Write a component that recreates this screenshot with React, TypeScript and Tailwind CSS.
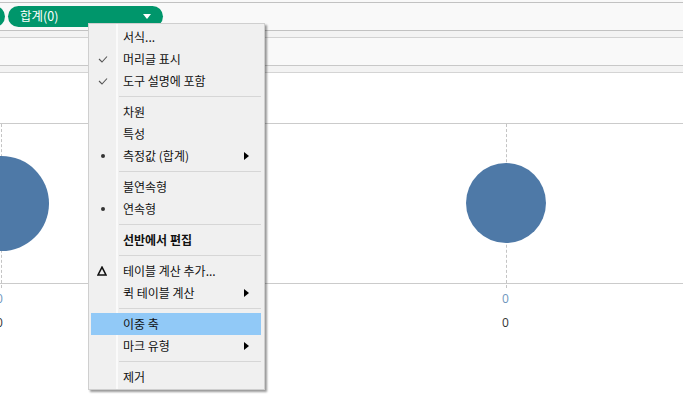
import React from 'react';

type Item =
  | { kind: 'item'; label: string; mark?: 'check' | 'dot' | 'delta'; sub?: boolean; bold?: boolean; active?: boolean }
  | { kind: 'sep' };

const items: Item[] = [
  { kind: 'item', label: '서식...' },
  { kind: 'item', label: '머리글 표시', mark: 'check' },
  { kind: 'item', label: '도구 설명에 포함', mark: 'check' },
  { kind: 'sep' },
  { kind: 'item', label: '차원' },
  { kind: 'item', label: '특성' },
  { kind: 'item', label: '측정값 (합계)', mark: 'dot', sub: true },
  { kind: 'sep' },
  { kind: 'item', label: '불연속형' },
  { kind: 'item', label: '연속형', mark: 'dot' },
  { kind: 'sep' },
  { kind: 'item', label: '선반에서 편집', bold: true },
  { kind: 'sep' },
  { kind: 'item', label: '테이블 계산 추가...', mark: 'delta' },
  { kind: 'item', label: '퀵 테이블 계산', sub: true },
  { kind: 'sep' },
  { kind: 'item', label: '이중 축', active: true },
  { kind: 'item', label: '마크 유형', sub: true },
  { kind: 'sep' },
  { kind: 'item', label: '제거' },
];

const font = { fontFamily: '"Noto Sans CJK KR", "Noto Sans", sans-serif' };

function Mark({ mark }: { mark?: 'check' | 'dot' | 'delta' }) {
  if (mark === 'check')
    return (
      <svg width="10" height="8" viewBox="0 0 10 8">
        <polyline points="1,4 4,7 9,1.5" fill="none" stroke="#555" strokeWidth="1.1" />
      </svg>
    );
  if (mark === 'dot') return <span className="block h-[4px] w-[4px] rounded-full bg-[#333]" />;
  if (mark === 'delta')
    return (
      <svg width="10" height="10" viewBox="0 0 10 10" className="mr-[2px]">
        <polygon points="5,1.2 9,9 1,9" fill="none" stroke="#111" strokeWidth="1.6" />
      </svg>
    );
  return null;
}

function ContextMenu() {
  return (
    <div
      className="absolute left-[88px] top-[23px] w-[177px] border border-[#cfcfcf] bg-[#f0f0f0] pt-[2px] pb-[1px] shadow-[2px_2px_2px_rgba(0,0,0,0.4)]"
      style={font}
    >
      <div className="absolute left-[27px] top-0 bottom-0 w-[2px] bg-[#fafafa]" />
      {items.map((it, i) =>
        it.kind === 'sep' ? (
          <div key={i} className="relative flex h-[9px] items-center pl-[30px] pr-[3px]">
            <div className="h-px w-full bg-[#d6d6d6]" />
          </div>
        ) : (
          <div
            key={i}
            className={`relative mx-[2px] mr-[3px] flex h-[22px] items-center text-[12px] text-[#111] ${
              it.active ? 'bg-[#91c9f7]' : ''
            }`}
          >
            <div className="flex w-[23px] shrink-0 items-center justify-center">
              <Mark mark={it.mark} />
            </div>
            <span className={`ml-[9px] flex-1 ${it.bold ? 'font-bold' : ''}`}>{it.label}</span>
            {it.sub && (
              <svg width="5" height="8" viewBox="0 0 5 8" className="mr-[12px]">
                <polygon points="0,0 5,4 0,8" fill="#000" />
              </svg>
            )}
          </div>
        )
      )}
    </div>
  );
}

export default function App() {
  return (
    <div className="relative h-[403px] w-[683px] overflow-hidden bg-white" style={font}>
      <div className="h-[2px] bg-[#f9f9f9]" />
      <div className="flex h-[29px] items-center gap-[3px] border-t border-b border-[#c2c2c2] bg-[#f9f9f9]">
        <div className="ml-[-20px] h-[21px] w-[25px] rounded-full bg-[#00966b]" />
        <div className="flex h-[21px] w-[155px] items-center rounded-full bg-[#00966b] pl-[12px] pr-[12px] text-[12.5px] text-white">
          <span className="flex-1">합계(0)</span>
          <svg width="8" height="5" viewBox="0 0 8 5">
            <polygon points="0,0 8,0 4,5" fill="#fff" />
          </svg>
        </div>
      </div>
      <div className="h-[7px] border-b border-[#d2d2d2] bg-[#f3f3f3]" />
      <div className="h-[28px] border-b border-[#c8c8c8] bg-[#f9f9f9]" />
      <div className="h-[7px] border-b border-[#d4d4d4] bg-[#f3f3f3]" />
      <div className="h-[50px]" />
      <div className="relative h-[161px] border-t border-b border-[#cbcbcb]">
        <div className="absolute left-[1px] top-0 h-[164px] border-l border-dashed border-[#c4c4c4]" />
        <div className="absolute left-[506px] top-0 h-[164px] border-l border-dashed border-[#c4c4c4]" />
        <div className="absolute left-[-46px] top-[32px] h-[95px] w-[95px] rounded-full bg-[#4e79a7]" />
        <div className="absolute left-[466px] top-[39px] h-[80px] w-[80px] rounded-full bg-[#4e79a7]" />
      </div>
      <div className="relative h-[50px] text-[12px]" style={{ fontFamily: '"Open Sans", sans-serif' }}>
        <span className="absolute left-[-4px] top-[6px] text-[#6f95bd]">0</span>
        <span className="absolute left-[502px] top-[6px] text-[#6f95bd]">0</span>
        <span className="absolute left-[-4px] top-[30px] text-[#333]">0</span>
        <span className="absolute left-[502px] top-[30px] text-[#333]">0</span>
      </div>
      <ContextMenu />
    </div>
  );
}
